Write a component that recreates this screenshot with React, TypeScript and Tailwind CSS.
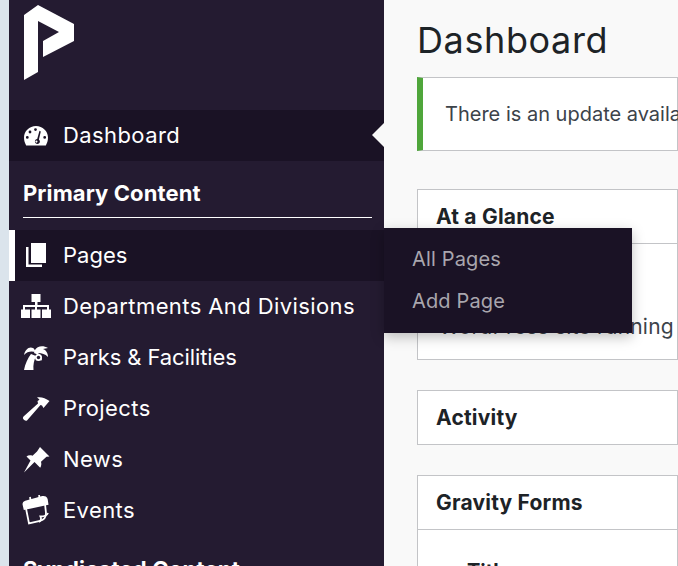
import React from "react";

const font = { fontFamily: '"Inter", "Noto Sans", sans-serif' };

const Gauge = () => (
  <svg width="26" height="22" viewBox="0 0 26 22" fill="white">
    <path fillRule="evenodd" d="M13 1C6.400 1 1 6.200 1 12.600c0 3 .8 5.400 2.200 7.900h19.600c1.400-2.500 2.200-4.900 2.200-7.900C25 6.200 19.600 1 13 1zM12.500 3.200a1.400 1.400 0 1 1 0 2.800 1.400 1.400 0 0 1 0-2.800zM7 5.600a1.400 1.400 0 1 1 0 2.800 1.400 1.400 0 0 1 0-2.800zM4.300 11a1.400 1.400 0 1 1 0 2.800 1.400 1.400 0 0 1 0-2.800zM21.700 11a1.400 1.400 0 1 1 0 2.800 1.400 1.400 0 0 1 0-2.800zM16.500 5.800l1.300.6-1.900 8.200c.6.500 1 1.200 1 2 0 1.400-1.100 2.500-2.500 2.500s-2.500-1.100-2.500-2.500c0-1.300 1-2.400 2.300-2.500l2.300-8.300z" />
    <circle cx="13.400" cy="16.600" r="1.100" />
  </svg>
);
const PagesIcon = () => (
  <svg width="22" height="25" viewBox="0 0 22 25" fill="white">
    <path d="M6 0h15v20H6z" />
    <path d="M1 4h2.500v17.500H17V24H1z" />
  </svg>
);
const Sitemap = () => (
  <svg width="32" height="25" viewBox="0 0 32 25" fill="white">
    <path d="M11.500 0h9v8h-3v3h11.500v5h-2v-3H17v3h-2v-3H5v3H3v-5h12V8h-3.500z" />
    <path d="M1 15.500h9V24H1zM11.500 15.500h9V24h-9zM22 15.500h9V24h-9z" />
  </svg>
);
const Palm = () => (
  <svg width="26" height="26" viewBox="0 0 26 26">
    <g fill="white">
      <path d="M1 25C2 19 5 13 8 9l5 2C11 15 10 20 10.500 25z" />
      <path d="M1 10C2 5 6 1 10 3c1 .5 2 2 2.500 4C9 6 4 6 1 10z" />
      <path d="M12 5c2-4 8-5 13-2l-5 1c3 1 5 4 5 8-3-3-6-4-10-4 3 2 4 5 4 8-2-4-5-7-8-8z" />
      <circle cx="15.500" cy="12.500" r="3.500" />
    </g>
    <circle cx="15.500" cy="12.500" r="1.700" fill="#241b31" />
  </svg>
);
const Hammer = () => (
  <svg width="28" height="24" viewBox="0 0 28 24" fill="white">
    <path d="M15 .5c4.500-.7 8.500.8 12.500 3.500l-6 7-1.500-2.500-1.500-.5L5 23.500c-1.500.7-3.500-.5-4-2-.2-.8 0-1.500.5-2L16 6.500l-.5-2.500 2-1.300c-.8-1-1.500-1.700-2.500-2.200z" />
  </svg>
);
const Pin = () => (
  <svg width="27" height="26" viewBox="0 0 27 26" fill="white">
    <path d="M17 0l9.500 9.500-3 .2-5.500 5c.7 2.300.3 4.300-.8 6L11.500 15 1 25.500 7.500 13.500 3.500 9.500c1.500-1.200 3.800-1.500 6-.7L14 4.500z" />
  </svg>
);
const Calendar = () => (
  <svg width="28" height="31" viewBox="0 0 28 31" fill="none" stroke="white" strokeWidth="1.800">
    <path d="M3.500 11l3.500 17.500 11-2.500c3.500-1 6-3.500 6-8l-1-9" />
    <path d="M1.500 9.500c-.3-1.500.5-2.500 2-3l17-4.500c2.200-.4 4 .5 4.300 2.500l.7 4.500L2.500 14z" fill="white" />
    <path d="M8 2l.8 4.500M17 0l.8 4" strokeWidth="1.800" />
    <path d="M26 18c-1 2.500-4 3.500-7.500 3.500 1 2 .5 4-1.500 5.500" />
  </svg>
);

const Item = ({ icon, label, active, current, bar, track }: { icon: React.ReactNode; label: string; active?: boolean; current?: boolean; bar?: boolean; track?: string }) => (
  <div className={`relative flex h-[51px] shrink-0 items-center text-[22px] text-white ${active ? "bg-[#1a1225]" : ""}`}>
    {bar && <span className="absolute left-0 top-0 h-full w-[6px] bg-white" />}
    <div className="flex h-full w-[54px] shrink-0 items-center justify-center">{icon}</div>
    <span className={`whitespace-nowrap ${track ?? "tracking-[0.4px]"}`}>{label}</span>
    {current && (
      <span className="absolute right-0 top-[13px] h-0 w-0 border-y-[12px] border-r-[12px] border-y-transparent border-r-[#f9f9f9]" />
    )}
  </div>
);

export default function App() {
  return (
    <div className="flex h-[566px] w-[678px] overflow-hidden bg-[#f9f9f9]" style={font}>
      <div className="w-[9px] shrink-0 bg-[#dbe4ec]" />
      <aside className="flex h-[600px] w-[375px] shrink-0 flex-col bg-[#241b31]">
        <div className="h-[110px] shrink-0 pl-[15px] pt-[5px]">
          <svg width="50" height="75" viewBox="0 0 50 75" fill="white">
            <path d="M0 10L14 0l36 19v17L19 52V36l16-9-21-11v51L0 75z" />
          </svg>
        </div>
        <Item icon={<Gauge />} label="Dashboard" current active />
        <div className="ml-[14px] mr-[12px] flex h-[57px] shrink-0 items-center border-b border-white pt-[8px] text-[22px] font-bold tracking-[0.1px] text-white">
          Primary Content
        </div>
        <div className="h-[12px] shrink-0" />
        <Item icon={<PagesIcon />} label="Pages" active bar track="tracking-[0px]" />
        <Item icon={<Sitemap />} label="Departments And Divisions" />
        <Item icon={<Palm />} label="Parks & Facilities" track="tracking-[-0.1px]" />
        <Item icon={<Hammer />} label="Projects" />
        <Item icon={<Pin />} label="News" />
        <Item icon={<Calendar />} label="Events" />
        <div className="ml-[14px] mt-[17px] shrink-0 whitespace-nowrap text-[22px] font-bold tracking-[0.2px] text-white">Syndicated Content</div>
      </aside>
      <main className="relative min-w-0 flex-1 pl-[33px]">
        <h1 className="whitespace-nowrap pt-[15px] text-[36px] leading-[50px] tracking-[0.600px] text-[#1d2327]">Dashboard</h1>
        <div className="mt-[12px] flex h-[74px] items-center whitespace-nowrap border border-l-[6px] border-[#c3c4c7] border-l-[#4fa63b] bg-white pl-[22px] text-[20px] text-[#3c434a]">
          There is an update available
        </div>
        <section className="mt-[38px] h-[171px] border border-[#c3c4c7] bg-white">
          <h2 className="flex h-[54px] items-center whitespace-nowrap border-b border-[#c3c4c7] pl-[18px] text-[21px] font-bold tracking-[0.200px] text-[#1d2327]">At a Glance</h2>
          <p className="whitespace-nowrap pl-[21px] pt-[70px] text-[21px] leading-[26px] tracking-[0.200px] text-[#3c434a]">WordPress site running a</p>
        </section>
        <section className="mt-[30px] flex h-[55px] items-center border border-[#c3c4c7] bg-white pl-[18px]">
          <h2 className="whitespace-nowrap text-[21px] font-bold tracking-[0.200px] text-[#1d2327]">Activity</h2>
        </section>
        <section className="mt-[30px] h-[200px] border border-[#c3c4c7] bg-white">
          <h2 className="flex h-[54px] items-center whitespace-nowrap border-b border-[#c3c4c7] pl-[18px] text-[21px] font-bold tracking-[0.200px] text-[#1d2327]">Gravity Forms</h2>
          <p className="pl-[49px] pt-[26px] text-[20px] font-bold text-[#1d2327]">Title</p>
        </section>
      </main>
      <div className="absolute left-[384px] top-[228px] flex h-[105px] w-[248px] flex-col bg-[#1a1225] pl-[28px] pt-[10px] text-[20px] leading-[42px] tracking-[0.150px] text-[#a9a6ae] shadow-[0_4px_12px_rgba(0,0,0,0.25)]">
        <span>All Pages</span>
        <span>Add Page</span>
      </div>
    </div>
  );
}
